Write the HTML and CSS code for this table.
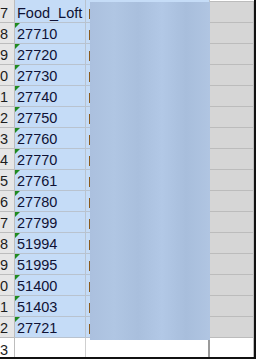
FILE: index.html
```html
<!DOCTYPE html>
<html>
<head>
<meta charset="utf-8">
<link rel="stylesheet" href="styles.css">
</head>
<body>
<div class="sheet">
  <div class="row first"><div class="rh"><span>17</span></div><div class="ca"><span>Food_Loft</span></div><div class="cb"><i class="tick"></i></div><div class="cc"></div></div>
  <div class="row"><div class="rh"><span>18</span></div><div class="ca num"><span>27710</span></div><div class="cb"><i class="tick"></i></div><div class="cc"></div></div>
  <div class="row"><div class="rh"><span>19</span></div><div class="ca num"><span>27720</span></div><div class="cb"><i class="tick"></i></div><div class="cc"></div></div>
  <div class="row"><div class="rh"><span>20</span></div><div class="ca num"><span>27730</span></div><div class="cb"><i class="tick"></i></div><div class="cc"></div></div>
  <div class="row"><div class="rh"><span>21</span></div><div class="ca num"><span>27740</span></div><div class="cb"><i class="tick"></i></div><div class="cc"></div></div>
  <div class="row"><div class="rh"><span>22</span></div><div class="ca num"><span>27750</span></div><div class="cb"><i class="tick"></i></div><div class="cc"></div></div>
  <div class="row"><div class="rh"><span>23</span></div><div class="ca num"><span>27760</span></div><div class="cb"><i class="tick"></i></div><div class="cc"></div></div>
  <div class="row"><div class="rh"><span>24</span></div><div class="ca num"><span>27770</span></div><div class="cb"><i class="tick"></i></div><div class="cc"></div></div>
  <div class="row"><div class="rh"><span>25</span></div><div class="ca num"><span>27761</span></div><div class="cb"><i class="tick"></i></div><div class="cc"></div></div>
  <div class="row"><div class="rh"><span>26</span></div><div class="ca num"><span>27780</span></div><div class="cb"><i class="tick"></i></div><div class="cc"></div></div>
  <div class="row"><div class="rh"><span>27</span></div><div class="ca num"><span>27799</span></div><div class="cb"><i class="tick"></i></div><div class="cc"></div></div>
  <div class="row"><div class="rh"><span>28</span></div><div class="ca num"><span>51994</span></div><div class="cb"><i class="tick"></i></div><div class="cc"></div></div>
  <div class="row"><div class="rh"><span>29</span></div><div class="ca num"><span>51995</span></div><div class="cb"><i class="tick"></i></div><div class="cc"></div></div>
  <div class="row"><div class="rh"><span>30</span></div><div class="ca num"><span>51400</span></div><div class="cb"><i class="tick"></i></div><div class="cc"></div></div>
  <div class="row"><div class="rh"><span>31</span></div><div class="ca num"><span>51403</span></div><div class="cb"><i class="tick"></i></div><div class="cc"></div></div>
  <div class="row"><div class="rh"><span>32</span></div><div class="ca num"><span>27721</span></div><div class="cb"><i class="tick"></i></div><div class="cc"></div></div>
  <div class="row last"><div class="rh"><span>33</span></div><div class="ca"></div><div class="cb"></div><div class="cc"></div></div>
  <div class="redact"></div>
</div>
</body>
</html>
```

FILE: styles.css
```css
html, body {
  margin: 0;
  padding: 0;
  background: #ffffff;
}

.sheet {
  position: relative;
  width: 254px;
  height: 357px;
  border-right: 2px solid #111111;
  border-bottom: 2px solid #111111;
  overflow: hidden;
  font-family: "Liberation Sans", Arial, sans-serif;
  font-size: 14.5px;
  color: #0f1235;
}

.row {
  display: grid;
  grid-template-columns: 15px 71px 124px 1fr;
  height: 21px;
}

.row.first {
  height: 23px;
}

.row > div {
  box-sizing: border-box;
  border-bottom: 1px solid #b9c3cf;
  border-right: 1px solid #b9c3cf;
  overflow: hidden;
  white-space: nowrap;
  display: flex;
  align-items: flex-end;
  line-height: 16px;
  padding-bottom: 1px;
  position: relative;
}

.rh {
  background: #e6e6e6;
  justify-content: flex-end;
  padding-right: 6px;
  color: #1c1c1c;
  border-color: #bdbdbd !important;
}

.ca {
  background: #c5dcf7;
  padding-left: 2px;
}

.ca.num::before {
  content: "";
  position: absolute;
  left: 0;
  top: 0;
  border-top: 5px solid #1f8a1f;
  border-right: 5px solid transparent;
}

.cb {
  background: #c5dcf7;
  padding-left: 3px;
}

.cc {
  background: #d6d6d6;
  border-color: #bcbcbc !important;
}

.row.first .cc {
  border-top: 1px solid #8d99a8;
  margin-top: 1px;
}

.tick {
  display: block;
  width: 2px;
  height: 10px;
  margin-bottom: 2px;
  background: #8a5a1c;
}

.row.last > div {
  background: #ffffff;
  border-bottom: none;
  border-color: #cfcfcf;
}

.row.last .cb {
  border-right: 2px solid #9a9a9a;
}

.redact {
  position: absolute;
  left: 90px;
  top: 2px;
  width: 120px;
  height: 338px;
  background: linear-gradient(90deg, #abc0de 0%, #b0c6e3 20%, #a9bfdd 40%, #b2c8e6 60%, #a8bedc 80%, #b0c5e2 100%);
}
```
